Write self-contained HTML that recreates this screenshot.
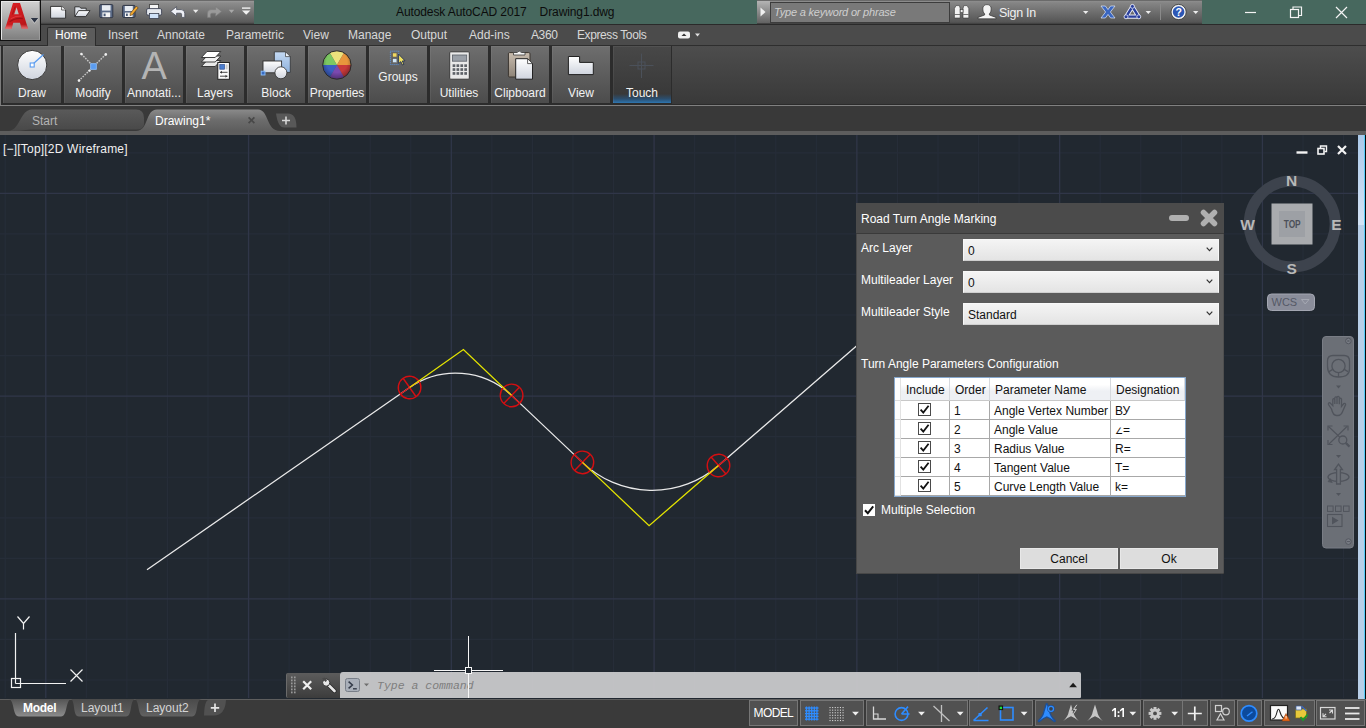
<!DOCTYPE html>
<html><head><meta charset="utf-8">
<style>
*{box-sizing:border-box;margin:0;padding:0}
html,body{width:1366px;height:728px;overflow:hidden;background:#212830;font-family:"Liberation Sans",sans-serif;font-size:12px;color:#e6e6e6}
.abs{position:absolute}
#titlebar{left:0;top:0;width:1366px;height:24px;background:#47685e}
#tabrow{left:0;top:24px;width:1366px;height:22px;background:#4b4b4b;border-top:1px solid #2a2a2a;border-bottom:1px solid #2e2e2e}
#ribbon{left:0;top:46px;width:1366px;height:59px;background:linear-gradient(#4d4d4d,#393939);border-bottom:1px solid #2b2b2b}
#doctabs{left:0;top:105px;width:1366px;height:26px;background:#393939;border-top:1px solid #808080}
#strip{left:0;top:131px;width:1366px;height:4px;background:#5d5d5d}
#canvas{left:0;top:135px;width:1366px;height:564px;background:#212830;overflow:hidden}
#statusbar{left:0;top:699px;width:1366px;height:29px;background:#3a3a3a}
.rb{position:absolute;top:0;width:58px;height:57px;background:linear-gradient(#6e6e6e,#4c4c4c);box-shadow:inset 1px 1px 0 rgba(255,255,255,0.06);text-align:center;font-size:12px;color:#f2f2f2}
.rb span{position:absolute;left:-4px;right:-4px;top:38px;margin-top:2px;white-space:nowrap}
.mt{position:absolute;top:3px;font-size:12px;color:#d8d8d8}

#dlg{left:856px;top:203px;width:368px;height:371px;background:#5b5b5b;color:#fff;font-size:12px;box-shadow:inset 1px -1px 0 rgba(0,0,0,0.22),inset -1px 0 0 rgba(0,0,0,0.12)}
#dlgt{left:0;top:0;width:368px;height:31px;background:#4b4b4b;border-bottom:1px solid #3a3a3a}
.lbl{position:absolute;left:5px;white-space:nowrap;color:#fff;font-size:12px;margin-top:1px}
.cmb{position:absolute;left:107px;width:256px;height:22px;background:linear-gradient(#f4f4f4,#e4e4e4);border:1px solid #f8f8f8;border-bottom-color:#cfcfcf;color:#111;font-size:12px;line-height:20px;padding-left:4px;padding-top:1px}
.cmb svg{position:absolute;right:5px;top:7px}
#grid{left:38px;top:174px;width:292px;height:120px;background:#fff;border:1px solid #86a7cc;color:#111}
#grid .h{position:absolute;top:0;height:23px;background:linear-gradient(#ffffff 30%,#eef0f4 60%,#eef0f4);border-right:1px solid #d6d9de;border-bottom:1px solid #c8c8c8;line-height:24px;padding-left:5px;font-size:12px;white-space:nowrap}
#grid .c{position:absolute;height:19px;border-right:1px solid #a8a8a8;border-bottom:1px solid #a8a8a8;line-height:21px;padding-left:4px;font-size:12px;white-space:nowrap;background:#fff}
#grid .rh{position:absolute;left:0;width:6px;background:#fcfcfc;border-right:1px solid #e2e2e2;border-bottom:1px solid #dcdcdc}
.cb{position:absolute;width:13px;height:13px;background:#fff;border:1px solid #4a4a4a}
.cb svg{position:absolute;left:0;top:0}
.btn{position:absolute;top:345px;height:21px;background:#dddddd;border:1px solid #e8e8e8;color:#111;text-align:center;line-height:21px;font-size:12px}

#appbtn{z-index:5;left:0;top:0;width:41px;height:41px;background:#111;}
#appbtn i{position:absolute;left:1px;top:1px;width:39px;height:39px;background:linear-gradient(#d0d0d0,#808080);border:1px solid #e6e6e6;border-bottom-color:#8a8a8a;border-right-color:#9a9a9a}
#qat{left:41px;top:0;width:213px;height:24px;background:linear-gradient(#9a9a9a 0,#8c8c8c 8%,#5a5a5a 92%,#3c3c3c 100%);border-top:1px solid #6a6a6a}
#info{left:757px;top:0;width:445px;height:24px;background:linear-gradient(#8e8e8e 0,#858585 8%,#555 92%,#3c3c3c 100%);border-top:1px solid #6a6a6a}
#srch{left:13px;top:1px;width:180px;height:21px;background:#797979;border:1px solid #3c3c3c;color:#cfcfcf;font-style:italic;font-size:11px;letter-spacing:-0.2px;line-height:19px;padding-left:3px;white-space:nowrap}
#ttl{left:396px;top:5px;font-size:12px;letter-spacing:-0.1px;color:#0c0c0c;white-space:pre}

#hometab{left:47px;top:2px;width:49px;height:21px;background:#5c5c5c;border:1px solid #2c2c2c;border-bottom:none;border-radius:2px 2px 0 0}

#cmd{left:286px;top:672px;width:795px;height:26px}
#cmdl{left:0;top:1px;width:54px;height:25px;background:linear-gradient(#5c5c5c,#3c3c3c);border-radius:2px 0 0 2px;border-left:1px solid #6a6a6a}
#cmdr{left:54px;top:0;width:740.5px;height:26px;background:rgba(201,201,203,0.95);border-radius:3px 2px 1px 0}
#cmdr span{position:absolute;left:37px;top:7px;font-family:"Liberation Mono",monospace;font-style:italic;font-size:11.5px;color:#7e7e7e;white-space:pre}
.sb{position:absolute;top:1px;height:26px;border:1px solid #767676;background:#515151}
</style></head><body>
<svg width="0" height="0" style="position:absolute"><defs>
<linearGradient id="gw" x1="0" y1="0" x2="0" y2="1"><stop offset="0" stop-color="#ffffff"/><stop offset="1" stop-color="#cfd4de"/></linearGradient>
<linearGradient id="gb" x1="0" y1="0" x2="0" y2="1"><stop offset="0" stop-color="#c4daf4"/><stop offset="1" stop-color="#8fb2dc"/></linearGradient>
<linearGradient id="gt" x1="0" y1="0" x2="0" y2="1"><stop offset="0" stop-color="#c8bcae"/><stop offset="1" stop-color="#8e8478"/></linearGradient>
<radialGradient id="gsh" cx="0.5" cy="0.4" r="0.6"><stop offset="0.6" stop-color="#000" stop-opacity="0"/><stop offset="1" stop-color="#000" stop-opacity="0.35"/></radialGradient>
</defs></svg>
<div id="titlebar" class="abs">
<div id="ttl" class="abs">Autodesk AutoCAD 2017    Drawing1.dwg</div>
<div id="qat" class="abs"><svg class="abs" style="left:0;top:-1px" width="213" height="24" viewBox="41 0 213 24">
<path d="M50.6 6.4 H61.6 L65.6 10 V18.2 H50.6Z" fill="url(#gw)" stroke="#2a2a2a" stroke-width="0.9"/><path d="M61.6 6.4 V10 H65.6" fill="#fff" stroke="#2a2a2a" stroke-width="0.7"/>
<path d="M74.8 16.4 V6.8 H79.6 L80.8 8.2 H86.2 V10.4" fill="#dfe3ea" stroke="#2a2a2a" stroke-width="0.9"/><path d="M74.8 16.6 L78.6 10.6 H90 L85.8 16.6Z" fill="url(#gw)" stroke="#2a2a2a" stroke-width="0.9"/>
<rect x="99.8" y="4.6" width="13" height="13" rx="1" fill="#5a6a86" stroke="#2a3040" stroke-width="0.9"/><rect x="102" y="5.2" width="8.6" height="5.4" fill="#e8ecf2"/><rect x="102.4" y="12.4" width="7.8" height="4.8" fill="#f4f4f4"/><rect x="103.6" y="13.6" width="2" height="2.6" fill="#4a5a76"/>
<rect x="122.6" y="5.4" width="12.4" height="12" rx="1" fill="#5a6a86" stroke="#2a3040" stroke-width="0.9"/><rect x="124.8" y="6" width="8" height="5" fill="#e8ecf2"/><rect x="125" y="12.6" width="7.6" height="4.4" fill="#f4f4f4"/><rect x="126" y="13.6" width="1.8" height="2.4" fill="#4a5a76"/><path d="M130.4 13.2 L136.2 6.2 L138.2 7.8 L132.4 14.8 L130 15.6Z" fill="#f0a830" stroke="#5a3a10" stroke-width="0.6"/>
<rect x="149.6" y="4.4" width="9" height="5" fill="#f4f4f4" stroke="#3a3a3a" stroke-width="0.8"/><rect x="146.6" y="8.6" width="15" height="6.6" rx="1.4" fill="#e4e8ee" stroke="#3a4050" stroke-width="0.9"/><rect x="149.4" y="13.4" width="9.4" height="5" fill="#cfe2f8" stroke="#3a4050" stroke-width="0.8"/>
<path d="M170.6 11.4 L176.6 6.6 V9.6 H181.2 Q184.8 9.6 184.8 13.4 V17.4 H181.6 V14.4 Q181.6 13.2 180.2 13.2 H176.6 V16.2Z" fill="#eef0f6" stroke="#4a4e5a" stroke-width="0.8"/>
<path d="M193 9.8 H198.4 L195.7 13Z" fill="#ececec"/>
<path d="M221.6 11.4 L215.6 6.6 V9.6 H211 Q207.4 9.6 207.4 13.4 V17.4 H210.6 V14.4 Q210.6 13.2 212 13.2 H215.6 V16.2Z" fill="#9a9a9a" stroke="#7a7a7a" stroke-width="0.6"/>
<path d="M228.8 9.8 H234.2 L231.5 13Z" fill="#a8a8a8"/>
<rect x="242" y="7.4" width="8.4" height="1.4" fill="#f0f0f0"/><path d="M242 10.6 H250.4 L246.2 14.8Z" fill="#f0f0f0"/>
</svg></div>
<div id="info" class="abs"><div class="abs" style="left:0;top:0;width:13px;height:22px;background:linear-gradient(#b4b4b4,#626262)"></div><svg class="abs" style="left:3px;top:6px" width="6" height="10"><path d="M0.5 0.5 L5.5 5 L0.5 9.5Z" fill="#f0f0f0"/></svg><div id="srch" class="abs">Type a keyword or phrase</div><svg class="abs" style="left:190px;top:-1px" width="255" height="24" viewBox="947 0 255 24">
<g fill="#f2f2f2" stroke="#333" stroke-width="0.6"><path d="M954.4 8.6 L956 5.6 H959.4 L960.2 8.6 V18 H954.4Z"/><path d="M963 8.6 L963.8 5.6 H967.2 L968.8 8.6 V18 H963Z"/><rect x="960.2" y="9.4" width="2.8" height="3.2"/></g>
<g stroke="#555" stroke-width="0.800"><line x1="954.600" y1="14.500" x2="960" y2="14.500"/><line x1="963.200" y1="14.500" x2="968.600" y2="14.500"/></g>
<path d="M987 4.6 Q991.2 4.6 991.2 9 Q991.2 12.6 989.4 13.8 V15 L996 17.4 V18.8 H978 V17.4 L984.6 15 V13.8 Q982.8 12.6 982.8 9 Q982.8 4.6 987 4.6Z" fill="#f4f4f4" stroke="#333" stroke-width="0.7"/>
<path d="M1083 11 H1088.4 L1085.7 14Z" fill="#ececec"/>
<path d="M1101 6 H1105.4 L1108 9.6 L1110.6 6 H1115 L1110.4 12 L1115 18 H1110.6 L1108 14.4 L1105.4 18 H1101 L1105.6 12Z" fill="#3a66c0" stroke="#e0e8f8" stroke-width="0.7"/>
<path d="M1132.4 6.6 L1138.6 16.6 H1126.2Z" fill="none" stroke="#e8ecf8" stroke-width="4.2" stroke-linejoin="round"/><path d="M1132.4 6.600 L1138.600 16.600 H1126.200Z" fill="none" stroke="#2a3f9c" stroke-width="2.400" stroke-linejoin="round"/><g fill="#2a3f9c" stroke="#e8ecf8" stroke-width="0.800"><circle cx="1132.400" cy="6.400" r="2"/><circle cx="1138.800" cy="16.800" r="2"/><circle cx="1126" cy="16.800" r="2"/></g>
<path d="M1145.6 11 H1151 L1148.3 14Z" fill="#ececec"/>
<line x1="1160.5" y1="4" x2="1160.5" y2="20" stroke="#8a8a8a" stroke-width="1"/>
<circle cx="1178.6" cy="12" r="7.6" fill="#f4f4f4" stroke="#333" stroke-width="0.8"/><circle cx="1178.6" cy="12" r="5.8" fill="#2c56b4"/><text x="1178.6" y="16" text-anchor="middle" font-family="Liberation Sans" font-weight="bold" font-size="10.5" fill="#fff">?</text>
<path d="M1193 11 H1198.4 L1195.7 14Z" fill="#ececec"/>
</svg><span class="abs" style="left:242px;top:5px;font-size:12.500px;letter-spacing:-0.300px;color:#f0f0f0;white-space:nowrap">Sign In</span></div>
<svg class="abs" style="left:1236px;top:0" width="130" height="24" viewBox="0 0 130 24"><g stroke="#f4f4f4" stroke-width="1.2" fill="none"><line x1="9" y1="12.5" x2="20" y2="12.5"/><rect x="54.5" y="9.5" width="8" height="8"/><path d="M57 9.5 V7 H65.5 V15.5 H62.5"/><path d="M100 7 L111 18 M111 7 L100 18"/></g></svg>
</div>
<div id="appbtn" class="abs"><i></i><svg class="abs" style="left:0;top:0" width="41" height="41" viewBox="0 0 41 41"><defs><linearGradient id="ra" x1="0" y1="0" x2="1" y2="1"><stop offset="0" stop-color="#dc2226"/><stop offset="0.55" stop-color="#cc1a1e"/><stop offset="1" stop-color="#b01418"/></linearGradient><linearGradient id="rb2" x1="0" y1="0" x2="0" y2="1"><stop offset="0" stop-color="#f08888" stop-opacity="0"/><stop offset="1" stop-color="#f49a9a" stop-opacity="0.75"/></linearGradient></defs>
<path d="M13 3 H20 L28.1 28.7 H21.8 L19.9 22.7 H13.300 L11.500 28.700 H5.100Z M16.600 7.300 L14.200 14.300 H18.800Z" fill="url(#ra)" fill-rule="evenodd"/>
<path d="M9.600 21.800 Q15.500 17.400 22.800 18.600" fill="none" stroke="#8e0e12" stroke-width="1.100" opacity="0.700"/><path d="M10.600 18.800 Q15.500 15.600 21.600 16" fill="none" stroke="#ee5a5e" stroke-width="0.800" opacity="0.600"/>
<path d="M15.200 6.500 L12.400 14.500" stroke="#8e0e12" stroke-width="0.900" opacity="0.600"/>
<path d="M6.400 24.200 H12.800 L11.500 28.700 H5.100Z" fill="url(#rb2)"/><path d="M20.400 24.200 H26.700 L28.100 28.700 H21.800Z" fill="url(#rb2)"/>
<path d="M30.800 18 H38.200 L34.500 22.700Z" fill="#2c3444"/><path d="M30.800 18 L34.500 22.700 L38.200 18" fill="none" stroke="#e8e8e8" stroke-width="0.600" opacity="0.700" transform="translate(0 0.700)"/></svg></div>
<div id="tabrow" class="abs"><div id="hometab" class="abs"></div><span class="mt" style="left:55px;color:#fff">Home</span><span class="mt" style="left:108px;color:#d8d8d8">Insert</span><span class="mt" style="left:157px;color:#d8d8d8">Annotate</span><span class="mt" style="left:226px;color:#d8d8d8">Parametric</span><span class="mt" style="left:303px;color:#d8d8d8">View</span><span class="mt" style="left:348px;color:#d8d8d8">Manage</span><span class="mt" style="left:411px;color:#d8d8d8">Output</span><span class="mt" style="left:469px;color:#d8d8d8">Add-ins</span><span class="mt" style="left:531px;color:#d8d8d8;letter-spacing:-0.4px">A360</span><span class="mt" style="left:577px;color:#d8d8d8;letter-spacing:-0.4px">Express Tools</span><svg class="abs" style="left:677px;top:5px" width="26" height="10" viewBox="0 0 26 10"><rect x="1" y="1.5" width="12" height="7" rx="2" fill="#f0f0f0"/><path d="M4.5 6 L7 3.5 L9.5 6Z" fill="#333"/><path d="M18 3.5 L23 3.5 L20.5 6.5Z" fill="#e0e0e0"/></svg></div>
<div id="ribbon" class="abs"><div class="abs" style="left:0;top:0;width:672px;height:59px;background:#2c2c2c;border-left:1px solid #7c7c7c"></div><div class="rb" id="rb0" style="left:3px"><svg class="abs" style="left:-1px;top:0" width="59" height="37" viewBox="0 0 59 37"><circle cx="30.2" cy="19" r="14.6" fill="url(#gw)" stroke="#3a3a3a" stroke-width="1"/><line x1="31" y1="18" x2="41.5" y2="8.6" stroke="#5a9cf0" stroke-width="1.3"/><rect x="28.2" y="17" width="4" height="4" fill="#fff" stroke="#5a9cf0" stroke-width="1.1"/></svg><span style="top:38px">Draw</span></div><div class="rb" id="rb1" style="left:64px"><svg class="abs" style="left:-1px;top:0" width="59" height="37" viewBox="0 0 59 37"><g stroke="#c8c8c8" stroke-width="1.4" stroke-dasharray="1.6 1.2"><line x1="18.4" y1="8" x2="30.5" y2="20.5"/><line x1="42.8" y1="8.4" x2="16" y2="34.6"/></g><g fill="#f0f0f0"><circle cx="18.4" cy="8" r="1.3"/><circle cx="42.8" cy="8.4" r="1.3"/><circle cx="16" cy="34.6" r="1.3"/><circle cx="26.5" cy="24.6" r="1.2"/></g><rect x="27.7" y="17.7" width="5.6" height="5.6" fill="#5a9cf0" stroke="#8cc0ff" stroke-width="0.8"/></svg><span style="top:38px">Modify</span></div><div class="rb" id="rb2" style="left:125px"><svg class="abs" style="left:-1px;top:0" width="59" height="37" viewBox="0 0 59 37"><text x="30.2" y="32.8" text-anchor="middle" font-family="Liberation Sans" font-size="38" fill="#b4b4b4">A</text></svg><span style="top:38px">Annotati...</span></div><div class="rb" id="rb3" style="left:186px"><svg class="abs" style="left:-1px;top:0" width="59" height="37" viewBox="0 0 59 37"><path d="M22 14.5 L35.8 14.5 L30.2 20.5 L16.4 20.5Z" fill="#e8e8e8" stroke="#2e2e2e" stroke-width="0.9"/><path d="M22 10.0 L35.8 10.0 L30.2 16.0 L16.4 16.0Z" fill="#f2f2f2" stroke="#2e2e2e" stroke-width="0.9"/><path d="M22 5.5 L35.8 5.5 L30.2 11.5 L16.4 11.5Z" fill="#ffffff" stroke="#2e2e2e" stroke-width="0.9"/><rect x="32.8" y="16.5" width="11.6" height="16.8" fill="#fbfbfb" stroke="#222" stroke-width="1"/><rect x="34.8" y="18.6" width="4.6" height="4.6" fill="#4a7ed0" stroke="#2a4a90" stroke-width="0.7"/><rect x="40.6" y="18.4" width="2" height="5" fill="#c8c8c8"/><g stroke="#333" stroke-width="0.9"><line x1="35" y1="26.3" x2="42.5" y2="26.3"/><line x1="35" y1="30.2" x2="42.5" y2="30.2"/></g><path d="M37 24.8 L35.2 26.3 L37 27.8Z M40.5 28.7 L42.3 30.2 L40.5 31.7Z" fill="#333"/></svg><span style="top:38px">Layers</span></div><div class="rb" id="rb4" style="left:247px"><svg class="abs" style="left:-1px;top:0" width="59" height="37" viewBox="0 0 59 37"><path d="M28.3 5.8 H39.5 L44.3 10.6 V26.4 H28.3Z" fill="url(#gb)" stroke="#3a3a3a" stroke-width="0.9"/><path d="M39.5 5.8 V10.6 H44.3Z" fill="#eef4fc" stroke="#3a3a3a" stroke-width="0.7"/><rect x="17" y="15" width="18.6" height="11.8" fill="url(#gw)" stroke="#2e2e2e" stroke-width="0.9"/><circle cx="34.9" cy="26.8" r="6" fill="url(#gw)" stroke="#3a3a3a" stroke-width="0.9"/><rect x="15.2" y="25.2" width="3.8" height="3.8" fill="#3a6cc0" stroke="#8cc0ff" stroke-width="0.9"/></svg><span style="top:38px">Block</span></div><div class="rb" id="rb5" style="left:308px"><svg class="abs" style="left:-1px;top:0" width="59" height="37" viewBox="0 0 59 37"><path d="M29.9 19 L37.00 6.70 A14.2 14.2 0 0 0 22.80 6.70Z" fill="#ece27c"/><path d="M29.9 19 L44.10 19.00 A14.2 14.2 0 0 0 37.00 6.70Z" fill="#e8963c"/><path d="M29.9 19 L37.00 31.30 A14.2 14.2 0 0 0 44.10 19.00Z" fill="#c9393a"/><path d="M29.9 19 L22.80 31.30 A14.2 14.2 0 0 0 37.00 31.30Z" fill="#7b49b0"/><path d="M29.9 19 L15.70 19.00 A14.2 14.2 0 0 0 22.80 31.30Z" fill="#3b5fc2"/><path d="M29.9 19 L22.80 6.70 A14.2 14.2 0 0 0 15.70 19.00Z" fill="#7cc862"/><circle cx="29.9" cy="19" r="14.2" fill="url(#gsh)" stroke="#2a2a2a" stroke-width="1"/></svg><span style="top:38px">Properties</span></div><div class="rb" id="rb6" style="left:369px"><svg class="abs" style="left:-1px;top:0" width="59" height="37" viewBox="0 0 59 37"><rect x="22.4" y="5.2" width="8.4" height="13.4" fill="none" stroke="#5a9cf0" stroke-width="0.9" stroke-dasharray="1 1"/><rect x="24.7" y="7" width="4.2" height="4" fill="#f0d860" stroke="#555" stroke-width="0.5"/><rect x="24.7" y="12.7" width="4.2" height="4" fill="#cfe6f8" stroke="#555" stroke-width="0.5"/><path d="M30.6 8.2 L30.6 17.6 L32.8 15.6 L34.5 19 L35.9 18.3 L34.3 15 L37 14.8Z" fill="#f0e060" stroke="#1a2a50" stroke-width="0.8"/></svg><span style="top:22px">Groups</span></div><div class="rb" id="rb7" style="left:430px"><svg class="abs" style="left:-1px;top:0" width="59" height="37" viewBox="0 0 59 37"><rect x="20.7" y="5.8" width="19.6" height="27.4" rx="1" fill="#e9e9e9" stroke="#3a3a3a" stroke-width="1"/><rect x="23.4" y="9" width="14.3" height="6.2" fill="#9aa0a8" stroke="#5a6068" stroke-width="0.8"/><rect x="23.6" y="18.3" width="2.7" height="2.7" fill="#5e6268"/><rect x="27.5" y="18.3" width="2.7" height="2.7" fill="#5e6268"/><rect x="31.400000000000002" y="18.3" width="2.7" height="2.7" fill="#5e6268"/><rect x="35.3" y="18.3" width="2.7" height="2.7" fill="#5e6268"/><rect x="23.6" y="22.2" width="2.7" height="2.7" fill="#5e6268"/><rect x="27.5" y="22.2" width="2.7" height="2.7" fill="#5e6268"/><rect x="31.400000000000002" y="22.2" width="2.7" height="2.7" fill="#5e6268"/><rect x="35.3" y="22.2" width="2.7" height="2.7" fill="#5e6268"/><rect x="23.6" y="26.1" width="2.7" height="2.7" fill="#5e6268"/><rect x="27.5" y="26.1" width="2.7" height="2.7" fill="#5e6268"/><rect x="31.400000000000002" y="26.1" width="2.7" height="2.7" fill="#5e6268"/><rect x="35.3" y="26.1" width="2.7" height="2.7" fill="#5e6268"/></svg><span style="top:38px">Utilities</span></div><div class="rb" id="rb8" style="left:491px"><svg class="abs" style="left:-1px;top:0" width="59" height="37" viewBox="0 0 59 37"><rect x="18.4" y="6.6" width="21.6" height="24.4" rx="1.2" fill="url(#gt)" stroke="#3a342e" stroke-width="1"/><path d="M23.5 9 V6.5 H27 Q29.2 3.6 31.5 6.5 H35 V9Z" fill="#f4f4f4" stroke="#3a3a3a" stroke-width="0.8"/><path d="M25.7 12.7 H37.6 L42.5 17.6 V33.2 H25.7Z" fill="url(#gw)" stroke="#222" stroke-width="1"/><path d="M37.6 12.7 V17.6 H42.5Z" fill="#fff" stroke="#222" stroke-width="0.7"/></svg><span style="top:38px">Clipboard</span></div><div class="rb" id="rb9" style="left:552px"><svg class="abs" style="left:-1px;top:0" width="59" height="37" viewBox="0 0 59 37"><path d="M17.4 10.5 H28.6 V16.4 H42.3 V28.6 H17.4Z" fill="url(#gw)" stroke="#222" stroke-width="1"/></svg><span style="top:38px">View</span></div><div class="rb" id="rb10" style="left:613px;background:linear-gradient(#484848,#393939 84%,#2b4f70 93%,#2f76b0)"><svg class="abs" style="left:-1px;top:0" width="59" height="37" viewBox="0 0 59 37"><g stroke="#4b515a" stroke-width="1" fill="none"><line x1="29.5" y1="7.6" x2="29.5" y2="32"/><line x1="17.5" y1="19.5" x2="41.5" y2="19.5"/><rect x="26" y="16" width="7" height="7"/></g></svg><span style="top:38px">Touch</span></div></div>
<div id="doctabs" class="abs"><svg class="abs" style="left:0;top:-1px" width="320" height="30" viewBox="0 105 320 30">
<defs><linearGradient id="t1" x1="0" y1="0" x2="0" y2="1"><stop offset="0" stop-color="#5a5a5a"/><stop offset="1" stop-color="#484848"/></linearGradient>
<linearGradient id="t2" x1="0" y1="0" x2="0" y2="1"><stop offset="0" stop-color="#8a8a8a"/><stop offset="0.5" stop-color="#6c6c6c"/><stop offset="1" stop-color="#5d5d5d"/></linearGradient></defs>
<path d="M8 131 C20 131 20 109.500 32 109.500 H136 Q144 109.500 144 118 V124 Q144 129.500 136 129.500 H30 Q20 131 8 131Z" fill="url(#t1)"/>
<path d="M136 131 C149 131 145 109.5 157 109.5 H258 C269 109.5 266 131 280 131Z" fill="url(#t2)"/>
<path d="M276 113.5 H288 Q296.5 113.5 296.5 127.5 H284 Q278 127.5 276 113.5Z" fill="#585858"/>
<path d="M282 120.500 H290 M286 116.500 V124.500" stroke="#d8d8d8" stroke-width="1.600"/>
<path d="M248.6 117.4 L254.4 123.2 M254.4 117.4 L248.6 123.2" stroke="#484848" stroke-width="1.700"/>
</svg>
<span class="abs" style="left:32px;top:8px;font-size:12px;color:#b4b4b4">Start</span>
<span class="abs" style="left:155px;top:8px;font-size:12px;color:#fff">Drawing1*</span></div>
<div id="strip" class="abs"></div>
<div id="canvas" class="abs">
<svg class="abs" style="left:0;top:0" width="1366" height="563" viewBox="0 0 1366 563"><g id="grd"><g stroke="#262d38" stroke-width="1.2"><line x1="5.23" y1="0" x2="5.23" y2="563"/><line x1="86.34" y1="0" x2="86.34" y2="563"/><line x1="126.89" y1="0" x2="126.89" y2="563"/><line x1="167.44" y1="0" x2="167.44" y2="563"/><line x1="208.0" y1="0" x2="208.0" y2="563"/><line x1="289.11" y1="0" x2="289.11" y2="563"/><line x1="329.66" y1="0" x2="329.66" y2="563"/><line x1="370.22" y1="0" x2="370.22" y2="563"/><line x1="410.77" y1="0" x2="410.77" y2="563"/><line x1="491.88" y1="0" x2="491.88" y2="563"/><line x1="532.44" y1="0" x2="532.44" y2="563"/><line x1="573.0" y1="0" x2="573.0" y2="563"/><line x1="613.55" y1="0" x2="613.55" y2="563"/><line x1="694.66" y1="0" x2="694.66" y2="563"/><line x1="735.21" y1="0" x2="735.21" y2="563"/><line x1="775.77" y1="0" x2="775.77" y2="563"/><line x1="816.32" y1="0" x2="816.32" y2="563"/><line x1="897.43" y1="0" x2="897.43" y2="563"/><line x1="937.99" y1="0" x2="937.99" y2="563"/><line x1="978.54" y1="0" x2="978.54" y2="563"/><line x1="1019.1" y1="0" x2="1019.1" y2="563"/><line x1="1100.21" y1="0" x2="1100.21" y2="563"/><line x1="1140.76" y1="0" x2="1140.76" y2="563"/><line x1="1181.32" y1="0" x2="1181.32" y2="563"/><line x1="1221.88" y1="0" x2="1221.88" y2="563"/><line x1="1302.98" y1="0" x2="1302.98" y2="563"/><line x1="1343.54" y1="0" x2="1343.54" y2="563"/><line x1="0" y1="17.79" x2="1366" y2="17.79"/><line x1="0" y1="98.91" x2="1366" y2="98.91"/><line x1="0" y1="139.46" x2="1366" y2="139.46"/><line x1="0" y1="180.01" x2="1366" y2="180.01"/><line x1="0" y1="220.57" x2="1366" y2="220.57"/><line x1="0" y1="301.68" x2="1366" y2="301.68"/><line x1="0" y1="342.24" x2="1366" y2="342.24"/><line x1="0" y1="382.79" x2="1366" y2="382.79"/><line x1="0" y1="423.35" x2="1366" y2="423.35"/><line x1="0" y1="504.46" x2="1366" y2="504.46"/><line x1="0" y1="545.01" x2="1366" y2="545.01"/></g><g stroke="#303648" stroke-width="1.3"><line x1="45.78" y1="0" x2="45.78" y2="563"/><line x1="248.56" y1="0" x2="248.56" y2="563"/><line x1="451.33" y1="0" x2="451.33" y2="563"/><line x1="654.11" y1="0" x2="654.11" y2="563"/><line x1="856.88" y1="0" x2="856.88" y2="563"/><line x1="1059.65" y1="0" x2="1059.65" y2="563"/><line x1="1262.43" y1="0" x2="1262.43" y2="563"/><line x1="0" y1="58.35" x2="1366" y2="58.35"/><line x1="0" y1="261.12" x2="1366" y2="261.12"/><line x1="0" y1="463.9" x2="1366" y2="463.9"/></g></g><path d="M147.0 434.7 L409.6 252.5 A81.2 81.2 0 0 1 511.6 260.4 L582.4 327.4 A100.9 100.9 0 0 0 718.5 330.5 L870.0 199.2" fill="none" stroke="#e9e9e9" stroke-width="1.3"/><g transform="translate(409.6 252.5) rotate(-35.2)" stroke="#d40f12" stroke-width="1.4" fill="none"><circle r="11.3"/><line x1="-11.3" y1="0" x2="11.3" y2="0"/><line x1="0" y1="-11.3" x2="0" y2="11.3"/></g><g transform="translate(511.6 260.4) rotate(43.6)" stroke="#d40f12" stroke-width="1.4" fill="none"><circle r="11.3"/><line x1="-11.3" y1="0" x2="11.3" y2="0"/><line x1="0" y1="-11.3" x2="0" y2="11.3"/></g><g transform="translate(582.4 327.4) rotate(43.5)" stroke="#d40f12" stroke-width="1.4" fill="none"><circle r="11.3"/><line x1="-11.3" y1="0" x2="11.3" y2="0"/><line x1="0" y1="-11.3" x2="0" y2="11.3"/></g><g transform="translate(718.5 330.5) rotate(-40.9)" stroke="#d40f12" stroke-width="1.4" fill="none"><circle r="11.3"/><line x1="-11.3" y1="0" x2="11.3" y2="0"/><line x1="0" y1="-11.3" x2="0" y2="11.3"/></g><path d="M409.6 252.5 L463.4 214.5 L511.6 260.4 M582.4 327.4 L649.1 390.7 L718.5 330.5" fill="none" stroke="#e4e400" stroke-width="1.3" stroke-linejoin="miter"/></svg>
<span class="abs" style="left:3px;top:7px;font-size:12px;color:#f0f0f0;white-space:nowrap;letter-spacing:0.2px">[&#8722;][Top][2D Wireframe]</span>
<div class="abs" style="left:1358px;top:0;width:8px;height:564px;background:#b8cfe8"></div>
<div class="abs" style="left:1358px;top:0;width:8px;height:90px;background:linear-gradient(#abc9ea,#d4e3f5)"></div>
<div class="abs" style="left:1364px;top:0;width:1px;height:564px;background:#56ccf8"></div><div class="abs" style="left:1365px;top:0;width:1px;height:564px;background:#0a0a0a"></div>
<svg class="abs" style="left:0;top:0" width="1366" height="563" viewBox="0 135 1366 563">
<g stroke="#f4f4f4" fill="none"><line x1="1296.5" y1="152.5" x2="1307.5" y2="152.5" stroke-width="2.4"/><rect x="1318" y="148.5" width="6" height="5.5" stroke-width="1.6"/><path d="M1320.5 148 V146 H1326.5 V151.5 H1324.5" stroke-width="1.4"/><path d="M1338 146 L1346 154 M1346 146 L1338 154" stroke-width="2.2"/></g>
<circle cx="1292.2" cy="224" r="43" fill="none" stroke="#3d434d" stroke-width="11"/>
<rect x="1271.5" y="203.5" width="41" height="41" fill="#a9abae"/><rect x="1279" y="211" width="26" height="26" fill="#9da0a5"/>
<text x="1292.2" y="228" text-anchor="middle" font-family="Liberation Sans" font-weight="bold" font-size="10" fill="#4c5059" textLength="17" lengthAdjust="spacingAndGlyphs">TOP</text>
<g font-family="Liberation Sans" font-weight="bold" font-size="15.5" fill="#b8b8b8" text-anchor="middle"><text x="1291.6" y="186">N</text><text x="1291.6" y="274">S</text><text x="1247.5" y="229.5">W</text><text x="1336.5" y="229.5">E</text></g>
<rect x="1267.5" y="294" width="47" height="16.5" rx="4" fill="#8a8d9a" stroke="#a4a7b2" stroke-width="1"/><text x="1271.5" y="306" font-family="Liberation Sans" font-size="11" fill="#555966">WCS</text><path d="M1301.5 299.5 H1309 L1305.2 304Z" fill="none" stroke="#a8abb6" stroke-width="0.9"/>
<rect x="1322.5" y="336.5" width="31" height="211.5" rx="3.5" fill="#6b6f76" stroke="#797d85" stroke-width="1"/>
<g stroke="#50545c" fill="none" stroke-width="1.3">
<circle cx="1348.4" cy="341" r="2.8" fill="#7a7e86" stroke-width="0.9"/><path d="M1347 339.6 L1349.8 342.4 M1349.8 339.6 L1347 342.4" stroke-width="0.8"/>
<path d="M1333 355.5 H1344 Q1349.5 355.5 1349.5 361 V369 Q1349.5 377 1338.5 377 Q1327.500 377 1327.500 366 V361 Q1327.500 355.500 1333 355.500Z"/><circle cx="1338.5" cy="366" r="6.6"/><path d="M1338.5 372.600 V377 M1332.8 369.4 L1329 371.6 M1344.2 369.4 L1348 371.6" />
<path d="M1336 385.5 H1341 L1338.5 388.5Z" fill="#50545c" stroke="none"/>
<path d="M1331.5 409 L1328.5 404.5 Q1328 402.5 1330 402.8 L1332.8 405.6 V399.5 Q1333.6 397.8 1334.8 399.5 V404 V397.800 Q1335.800 396 1337 397.800 V404 V397.300 Q1338.200 395.600 1339.300 397.300 V404.300 V399 Q1340.500 397.500 1341.500 399 V406.500 L1343.800 403.600 Q1345.600 402.800 1345.600 404.600 L1342.600 411.500 Q1341 415.500 1338 415.500 H1336.500 Q1333 415.500 1331.500 409Z"/>
<path d="M1328.5 426.5 L1347.500 444.500 M1347 426.500 L1329 444" stroke-width="1.1"/><path d="M1328 430.500 V426 H1332.500 M1343.500 426 H1348 V430.500 M1328 440 V444.500 H1332.500" stroke-width="1.2"/><circle cx="1342.800" cy="440" r="4" fill="#6b6f76"/><path d="M1345.800 443 L1349.500 446.600" stroke-width="2.2"/>
<path d="M1336 455 H1341 L1338.5 458Z" fill="#50545c" stroke="none"/>
<ellipse cx="1338.5" cy="477" rx="10.500" ry="4.400"/><path d="M1336.600 484 V469.500 H1334.600 L1338.500 464 L1342.400 469.500 H1340.400 V484Z" fill="#6b6f76"/><path d="M1330.500 478.600 L1328 481.600 L1332.500 482.600" fill="#50545c" stroke-width="0.8"/>
<path d="M1336 493 H1341 L1338.5 496Z" fill="#50545c" stroke="none"/>
<rect x="1327.500" y="506" width="5.600" height="5.400" stroke-width="1"/><rect x="1335.500" y="506" width="5.600" height="5.400" stroke-width="1"/><rect x="1343.500" y="506" width="5.600" height="5.400" stroke-width="1"/>
<rect x="1327.500" y="514.500" width="14.500" height="12" stroke-width="1.100"/><path d="M1332 516.800 V524.400 L1338.600 520.600Z" fill="#50545c" stroke="none"/>
<circle cx="1348.400" cy="541.600" r="2.800" fill="#7a7e86" stroke-width="0.900"/><path d="M1346.800 541.600 H1350" stroke-width="0.900"/>
</g>
<g stroke="#f2f2f2" stroke-width="1.2" fill="none"><line x1="15.5" y1="633" x2="15.5" y2="683.5"/><line x1="15.5" y1="683.5" x2="66" y2="683.5"/><rect x="11.5" y="678.5" width="9" height="9"/><path d="M17.5 616.5 L23.5 623.5 L29.5 616.5 M23.5 623.5 V629.5"/><path d="M70.5 669.5 L82.5 681.5 M82.5 669.5 L70.5 681.5"/></g>

</svg>
</div>
<div id="dlg" class="abs">
<div id="dlgt" class="abs"><span class="lbl" style="top:8px">Road Turn Angle Marking</span>
<svg class="abs" style="left:311px;top:5px" width="54" height="22" viewBox="0 0 54 22"><line x1="5" y1="10" x2="19" y2="10" stroke="#b0b0b0" stroke-width="6" stroke-linecap="round"/><path d="M36.5 4.5 L47.5 15.5 M47.5 4.5 L36.5 15.5" stroke="#b0b0b0" stroke-width="5.5" stroke-linecap="round"/></svg>
</div>
<span class="lbl" style="top:37px">Arc Layer</span><div class="cmb" style="top:36px">0<svg width="7" height="5" viewBox="0 0 7 5"><path d="M0.7 0.7 L3.5 3.6 L6.3 0.7" fill="none" stroke="#333" stroke-width="1.2"/></svg></div>
<span class="lbl" style="top:69px">Multileader Layer</span><div class="cmb" style="top:68px">0<svg width="7" height="5" viewBox="0 0 7 5"><path d="M0.7 0.7 L3.5 3.6 L6.3 0.7" fill="none" stroke="#333" stroke-width="1.2"/></svg></div>
<span class="lbl" style="top:101px">Multileader Style</span><div class="cmb" style="top:100px">Standard<svg width="7" height="5" viewBox="0 0 7 5"><path d="M0.7 0.7 L3.5 3.6 L6.3 0.7" fill="none" stroke="#333" stroke-width="1.2"/></svg></div>
<span class="lbl" style="top:153px">Turn Angle Parameters Configuration</span>
<div id="grid" class="abs"><div class="rh" style="top:0;height:23px"></div><div class="h" style="left:6px;width:49px">Include</div><div class="h" style="left:55px;width:40px">Order</div><div class="h" style="left:95px;width:121px">Parameter Name</div><div class="h" style="left:216px;width:74px">Designation</div><div class="rh" style="top:23px;height:19px"></div><div class="c" style="left:6px;top:23px;width:49px"><div class="cb" style="left:17px;top:2px"><svg width="11" height="11" viewBox="0 0 11 11"><path d="M1.6 5.6 L4.3 8.6 L9.6 1.8" fill="none" stroke="#111" stroke-width="1.800"/></svg></div></div><div class="c" style="left:55px;top:23px;width:40px">1</div><div class="c" style="left:95px;top:23px;width:121px">Angle Vertex Number</div><div class="c" style="left:216px;top:23px;width:74px;border-right:none">ВУ</div><div class="rh" style="top:42px;height:19px"></div><div class="c" style="left:6px;top:42px;width:49px"><div class="cb" style="left:17px;top:2px"><svg width="11" height="11" viewBox="0 0 11 11"><path d="M1.6 5.6 L4.3 8.6 L9.6 1.8" fill="none" stroke="#111" stroke-width="1.800"/></svg></div></div><div class="c" style="left:55px;top:42px;width:40px">2</div><div class="c" style="left:95px;top:42px;width:121px">Angle Value</div><div class="c" style="left:216px;top:42px;width:74px;border-right:none"><span style="font-size:9px">∠</span>=</div><div class="rh" style="top:61px;height:19px"></div><div class="c" style="left:6px;top:61px;width:49px"><div class="cb" style="left:17px;top:2px"><svg width="11" height="11" viewBox="0 0 11 11"><path d="M1.6 5.6 L4.3 8.6 L9.6 1.8" fill="none" stroke="#111" stroke-width="1.800"/></svg></div></div><div class="c" style="left:55px;top:61px;width:40px">3</div><div class="c" style="left:95px;top:61px;width:121px">Radius Value</div><div class="c" style="left:216px;top:61px;width:74px;border-right:none">R=</div><div class="rh" style="top:80px;height:19px"></div><div class="c" style="left:6px;top:80px;width:49px"><div class="cb" style="left:17px;top:2px"><svg width="11" height="11" viewBox="0 0 11 11"><path d="M1.6 5.6 L4.3 8.6 L9.6 1.8" fill="none" stroke="#111" stroke-width="1.800"/></svg></div></div><div class="c" style="left:55px;top:80px;width:40px">4</div><div class="c" style="left:95px;top:80px;width:121px">Tangent Value</div><div class="c" style="left:216px;top:80px;width:74px;border-right:none">T=</div><div class="rh" style="top:99px;height:19px"></div><div class="c" style="left:6px;top:99px;width:49px"><div class="cb" style="left:17px;top:2px"><svg width="11" height="11" viewBox="0 0 11 11"><path d="M1.6 5.6 L4.3 8.6 L9.6 1.8" fill="none" stroke="#111" stroke-width="1.800"/></svg></div></div><div class="c" style="left:55px;top:99px;width:40px">5</div><div class="c" style="left:95px;top:99px;width:121px">Curve Length Value</div><div class="c" style="left:216px;top:99px;width:74px;border-right:none">k=</div></div>
<div class="cb" style="left:7px;top:301px;width:12px;height:12px;border:none;padding:0"><svg width="12" height="12" viewBox="0 0 12 12" style="position:absolute;left:0;top:0"><path d="M2 6.200 L4.800 9.200 L10.200 2.400" fill="none" stroke="#111" stroke-width="2"/></svg></div><div style="display:none"><svg width="11" height="11" viewBox="0 0 11 11"><path d="M1.6 5.6 L4.3 8.6 L9.6 1.8" fill="none" stroke="#111" stroke-width="1.800"/></svg></div><span class="lbl" style="left:25px;top:299px">Multiple Selection</span>
<div class="btn" style="left:164px;width:98px">Cancel</div><div class="btn" style="left:264px;width:98px">Ok</div>
</div>
<!--DIALOG-END-->
<div id="cmd" class="abs"><div id="cmdl" class="abs"><svg class="abs" style="left:0;top:0" width="54" height="25" viewBox="286 673 54 25">
<g fill="#9a9a9a"><rect x="290" y="676.5" width="1.600" height="1.800"/><rect x="293" y="676.500" width="1.600" height="1.800"/><rect x="290" y="679.500" width="1.600" height="1.800"/><rect x="293" y="679.500" width="1.600" height="1.800"/><rect x="290" y="682.500" width="1.600" height="1.800"/><rect x="293" y="682.500" width="1.600" height="1.800"/><rect x="290" y="685.500" width="1.600" height="1.800"/><rect x="293" y="685.500" width="1.600" height="1.800"/><rect x="290" y="688.500" width="1.600" height="1.800"/><rect x="293" y="688.500" width="1.600" height="1.800"/><rect x="290" y="691.500" width="1.600" height="1.800"/><rect x="293" y="691.500" width="1.600" height="1.800"/></g>
<path d="M302.200 681.200 L310.200 689.200 M310.200 681.200 L302.200 689.200" stroke="#efefef" stroke-width="2.200"/>
<path d="M333.500 691 L326.500 684" stroke="#2a2a2a" stroke-width="4.400" stroke-linecap="round"/><path d="M333.500 691 L326.500 684" stroke="#e8e8e8" stroke-width="2.600" stroke-linecap="round"/><circle cx="325.200" cy="682.600" r="3.600" fill="#e8e8e8" stroke="#2a2a2a" stroke-width="0.900"/><path d="M324.600 682 L321 678.600 L323.400 677.600 L326 680.600Z" fill="#4a4a4a"/>
</svg></div>
<div id="cmdr" class="abs"><svg class="abs" style="left:0;top:1px" width="741" height="25" viewBox="340 673 741 25"><rect x="345.500" y="678.500" width="14" height="13" rx="2" fill="#a9afb9" stroke="#787e88" stroke-width="1"/><path d="M348.600 681.600 L352.400 685 L348.600 688.400" fill="none" stroke="#333a48" stroke-width="1.500"/><line x1="353" y1="688.800" x2="356.800" y2="688.800" stroke="#333a48" stroke-width="1.400"/><path d="M364 683.400 H369 L366.500 686.200Z" fill="#6e6e6e"/><path d="M1069.200 687.200 H1077 L1073.100 682.800Z" fill="#1a1a1a"/></svg><span>Type a command</span></div></div>
<svg class="abs" style="left:430px;top:630px;z-index:4" width="80" height="70" viewBox="430 630 80 70"><g stroke="#f6f6f6" stroke-width="1" fill="none" shape-rendering="crispEdges"><line x1="468.5" y1="636" x2="468.5" y2="698"/><line x1="434" y1="670.5" x2="503" y2="670.5"/><rect x="465.500" y="667.500" width="6" height="6" fill="#212830"/></g></svg>
<div id="statusbar" class="abs"><div class="abs" style="left:0;top:0;width:1366px;height:1px;background:#5e5e5e"></div><svg class="abs" style="left:0;top:-1px" width="240" height="30" viewBox="0 698 240 30">
<defs><linearGradient id="lm" x1="0" y1="0" x2="0" y2="1"><stop offset="0" stop-color="#545454"/><stop offset="1" stop-color="#8c8c8c"/></linearGradient>
<linearGradient id="ll" x1="0" y1="0" x2="0" y2="1"><stop offset="0" stop-color="#4a4a4a"/><stop offset="1" stop-color="#616161"/></linearGradient></defs>

<path d="M70 699 C76 699 72 716.500 79 716.500 H126 C133 716.500 129 699 136 699Z" fill="url(#ll)"/>
<path d="M134 699 C140 699 137 716.500 144 716.500 H192 C199 716.500 195 699 202 699Z" fill="url(#ll)"/>
<path d="M8 699 C15 699 12 716.500 19 716.500 H61 C68 716.500 65 699 72 699Z" fill="url(#lm)"/>
<path d="M208.500 700 H226 Q225 715.500 214 715.500 H204 Q204.500 700 208.500 700Z" fill="#515151"/>
<path d="M210.800 707.800 H219.200 M215 703.600 V712" stroke="#e4e4e4" stroke-width="1.700"/>
</svg>
<span class="abs" style="left:23px;top:2px;font-size:12px;font-weight:bold;color:#fff;letter-spacing:-0.3px">Model</span>
<span class="abs" style="left:81px;top:2px;font-size:12px;color:#d4d4d4">Layout1</span>
<span class="abs" style="left:146px;top:2px;font-size:12px;color:#d4d4d4">Layout2</span><div class="sb" style="left:749px;width:49px"></div><div class="sb" style="left:800px;width:64px"></div><div class="sb" style="left:866px;width:102px"></div><div class="sb" style="left:969px;width:64px"></div><div class="sb" style="left:1034.5px;width:106px"></div><div class="sb" style="left:1142.5px;width:65px"></div><div class="sb" style="left:1209.5px;width:25.5px"></div><div class="sb" style="left:1236.5px;width:25.5px"></div><div class="sb" style="left:1263.5px;width:51px"></div><div class="sb" style="left:1316px;width:49px"></div><div class="abs" style="left:1182px;top:2px;width:1px;height:24px;background:#767676"></div><span class="abs" style="left:753.500px;top:7px;font-size:12px;color:#fff;letter-spacing:-0.6px">MODEL</span><svg class="abs" style="left:740px;top:0" width="626" height="29" viewBox="740 699 626 29"><g stroke="#2e8cff" stroke-width="1.300"><line x1="806.5" y1="706.500" x2="806.5" y2="720.500"/><line x1="809.1" y1="706.500" x2="809.1" y2="720.500"/><line x1="811.7" y1="706.500" x2="811.7" y2="720.500"/><line x1="814.3" y1="706.500" x2="814.3" y2="720.500"/><line x1="816.9" y1="706.500" x2="816.9" y2="720.500"/><line x1="805" y1="708.0" x2="818.500" y2="708.0"/><line x1="805" y1="710.8" x2="818.500" y2="710.8"/><line x1="805" y1="713.6" x2="818.500" y2="713.6"/><line x1="805" y1="716.4" x2="818.500" y2="716.4"/><line x1="805" y1="719.2" x2="818.500" y2="719.2"/></g><g fill="#d8d8d8"><rect x="829.5" y="707.0" width="1.100" height="1.100"/><rect x="832.1" y="707.0" width="1.100" height="1.100"/><rect x="834.7" y="707.0" width="1.100" height="1.100"/><rect x="837.3" y="707.0" width="1.100" height="1.100"/><rect x="839.9" y="707.0" width="1.100" height="1.100"/><rect x="842.5" y="707.0" width="1.100" height="1.100"/><rect x="829.5" y="709.6" width="1.100" height="1.100"/><rect x="832.1" y="709.6" width="1.100" height="1.100"/><rect x="834.7" y="709.6" width="1.100" height="1.100"/><rect x="837.3" y="709.6" width="1.100" height="1.100"/><rect x="839.9" y="709.6" width="1.100" height="1.100"/><rect x="842.5" y="709.6" width="1.100" height="1.100"/><rect x="829.5" y="712.2" width="1.100" height="1.100"/><rect x="832.1" y="712.2" width="1.100" height="1.100"/><rect x="834.7" y="712.2" width="1.100" height="1.100"/><rect x="837.3" y="712.2" width="1.100" height="1.100"/><rect x="839.9" y="712.2" width="1.100" height="1.100"/><rect x="842.5" y="712.2" width="1.100" height="1.100"/><rect x="829.5" y="714.8" width="1.100" height="1.100"/><rect x="832.1" y="714.8" width="1.100" height="1.100"/><rect x="834.7" y="714.8" width="1.100" height="1.100"/><rect x="837.3" y="714.8" width="1.100" height="1.100"/><rect x="839.9" y="714.8" width="1.100" height="1.100"/><rect x="842.5" y="714.8" width="1.100" height="1.100"/><rect x="829.5" y="717.4" width="1.100" height="1.100"/><rect x="832.1" y="717.4" width="1.100" height="1.100"/><rect x="834.7" y="717.4" width="1.100" height="1.100"/><rect x="837.3" y="717.4" width="1.100" height="1.100"/><rect x="839.9" y="717.4" width="1.100" height="1.100"/><rect x="842.5" y="717.4" width="1.100" height="1.100"/><rect x="829.5" y="720.0" width="1.100" height="1.100"/><rect x="832.1" y="720.0" width="1.100" height="1.100"/><rect x="834.7" y="720.0" width="1.100" height="1.100"/><rect x="837.3" y="720.0" width="1.100" height="1.100"/><rect x="839.9" y="720.0" width="1.100" height="1.100"/><rect x="842.5" y="720.0" width="1.100" height="1.100"/></g><path d="M852.1 711.8 H858.9 L855.5 715.6Z" fill="#f0f0f0"/><path d="M873.500 706.500 V719 H886" fill="none" stroke="#d8d8d8" stroke-width="1.300"/><path d="M873.500 714 H878 V719" fill="none" stroke="#d8d8d8" stroke-width="1.100"/><g stroke="#2e8cff" fill="none" stroke-width="1.600"><circle cx="901.500" cy="714" r="6.400"/><path d="M901.500 714 H909.500 M901.500 714 L908 706.600"/></g><path d="M918.1 711.8 H924.9 L921.5 715.6Z" fill="#f0f0f0"/><g stroke="#c0c0c0" stroke-width="1.300" fill="none"><line x1="941.500" y1="705" x2="941.500" y2="722"/><line x1="933.500" y1="706" x2="949.500" y2="721"/></g><path d="M956.8000000000001 711.8 H963.6 L960.2 715.6Z" fill="#f0f0f0"/><g stroke="#2e8cff" fill="none" stroke-width="1.600"><path d="M973.500 720.500 H988.500 M973.500 720.500 L987.500 707.500"/></g><rect x="978.500" y="713" width="3.200" height="3.200" fill="#2e8cff"/><rect x="1000.500" y="707.500" width="12.500" height="12.500" fill="none" stroke="#2e8cff" stroke-width="1.600"/><rect x="998.500" y="705.500" width="4.600" height="4.600" fill="#111"/><rect x="999.700" y="706.700" width="2.400" height="2.400" fill="#1ee03a"/><path d="M1020.6999999999999 711.8 H1027.5 L1024.1 715.6Z" fill="#f0f0f0"/><path d="M1046.8 704.4 L1049.0 711.4 Q1049.7 716.4 1054.6 720.9 Q1050.0 717.2 1046.8 716.2 Q1043.6 717.2 1039.0 720.9 Q1043.8999999999999 716.4 1044.6 711.4Z" fill="none" stroke="#1d4f96" stroke-width="2.600" stroke-linejoin="round"/><path d="M1046.8 704.4 L1049.0 711.4 Q1049.7 716.4 1054.6 720.9 Q1050.0 717.2 1046.8 716.2 Q1043.6 717.2 1039.0 720.9 Q1043.8999999999999 716.4 1044.6 711.4Z" fill="#2e8cff"/><circle cx="1051" cy="708.800" r="2.500" fill="#3f4650" stroke="#1d4f96" stroke-width="2.600"/><circle cx="1051" cy="708.800" r="2.500" fill="#3a4048" stroke="#2e8cff" stroke-width="1.300"/><path d="M1071.0 704.4 L1073.2 711.4 Q1073.9 716.4 1078.8 720.9 Q1074.2 717.2 1071.0 716.2 Q1067.8 717.2 1063.2 720.9 Q1068.1 716.4 1068.8 711.4Z" fill="#c6c6c6"/><path d="M1076.800 704.800 L1073.600 709.400 H1076.400 L1073.400 713.800" stroke="#515151" stroke-width="2.400" fill="none"/><path d="M1076.800 704.800 L1073.600 709.400 H1076.400 L1073.400 713.800" stroke="#d0d0d0" stroke-width="1" fill="none"/><path d="M1095.0 704.4 L1097.2 711.4 Q1097.9 716.4 1102.8 720.9 Q1098.2 717.2 1095.0 716.2 Q1091.8 717.2 1087.2 720.9 Q1092.1 716.4 1092.8 711.4Z" fill="#c6c6c6"/><g fill="#fff"><path d="M1111.9 710.2 L1114.2 708 H1116.0 V717 H1114.4 V710 L1112.2 711.6Z"/><path d="M1119.9 710.2 L1122.2 708 H1124.0 V717 H1122.4 V710 L1120.2 711.6Z"/><rect x="1117.7" y="711.3" width="1.7" height="1.8"/><rect x="1117.7" y="715.1" width="1.7" height="1.8"/></g><path d="M1129.4 711.8 H1136.2 L1132.8 715.6Z" fill="#f0f0f0"/><g fill="#c8c8c8"><rect x="-1.500" y="-6.400" width="3" height="3" transform="translate(1155 713.400) rotate(0)"/><rect x="-1.500" y="-6.400" width="3" height="3" transform="translate(1155 713.400) rotate(45)"/><rect x="-1.500" y="-6.400" width="3" height="3" transform="translate(1155 713.400) rotate(90)"/><rect x="-1.500" y="-6.400" width="3" height="3" transform="translate(1155 713.400) rotate(135)"/><rect x="-1.500" y="-6.400" width="3" height="3" transform="translate(1155 713.400) rotate(180)"/><rect x="-1.500" y="-6.400" width="3" height="3" transform="translate(1155 713.400) rotate(225)"/><rect x="-1.500" y="-6.400" width="3" height="3" transform="translate(1155 713.400) rotate(270)"/><rect x="-1.500" y="-6.400" width="3" height="3" transform="translate(1155 713.400) rotate(315)"/><circle cx="1155" cy="713.400" r="4.600"/></g><circle cx="1155" cy="713.400" r="1.900" fill="#4a4a4a"/><path d="M1171.3 711.8 H1178.1000000000001 L1174.7 715.6Z" fill="#f0f0f0"/><path d="M1187.800 713.500 H1201.800 M1194.800 706.500 V720.500" stroke="#f0f0f0" stroke-width="1.700"/><g stroke="#d0d0d0" stroke-width="1.200" fill="none"><rect x="1215.500" y="705.500" width="6" height="6"/><circle cx="1226" cy="711.500" r="3.300"/><path d="M1220.500 713.800 L1224 720 H1217Z"/></g><circle cx="1249" cy="713.400" r="7.800" fill="#0c4a9c" stroke="#2e8cff" stroke-width="1.700"/><path d="M1247 716 L1252.500 711.800" stroke="#2e8cff" stroke-width="1.400"/><rect x="1270.500" y="705.500" width="17" height="14.500" fill="#fafafa" stroke="#222" stroke-width="1.200"/><path d="M1272 719 Q1275.500 719 1277 712 Q1278.500 706.500 1280 712 Q1282 719 1286.500 719" fill="none" stroke="#222" stroke-width="1.100"/><path d="M1286 713.500 L1290 721 H1282Z" fill="#e86a1a" stroke="#8a3a0a" stroke-width="0.500"/><rect x="1285.600" y="716" width="0.900" height="2.600" fill="#fff"/><rect x="1295.500" y="709" width="11" height="9" fill="#e8c83a" stroke="#7a6a1a" stroke-width="0.700"/><path d="M1296 706 H1301.500 V710 H1296Z" fill="#dfe8f4" stroke="#3a5a9a" stroke-width="0.700"/><path d="M1302 706.500 L1306.500 711" stroke="#3a66c0" stroke-width="1.300"/><path d="M1300.500 717 L1303 720 L1307.500 714.500" fill="none" stroke="#1a9a2a" stroke-width="1.800"/><rect x="1320.500" y="707.500" width="14.500" height="11.500" fill="none" stroke="#d8d8d8" stroke-width="1.200"/><path d="M1329 710 H1332.500 V713.500 M1332.500 710 L1329.500 713 M1326.500 716.800 H1323 V713.300 M1323 716.800 L1326 713.800" stroke="#d8d8d8" stroke-width="1.100" fill="none"/><g stroke="#e8e8e8" stroke-width="1.800"><line x1="1345" y1="708" x2="1359.500" y2="708"/><line x1="1345" y1="713.500" x2="1359.500" y2="713.500"/><line x1="1345" y1="719" x2="1359.500" y2="719"/></g></svg></div>
</body></html>
